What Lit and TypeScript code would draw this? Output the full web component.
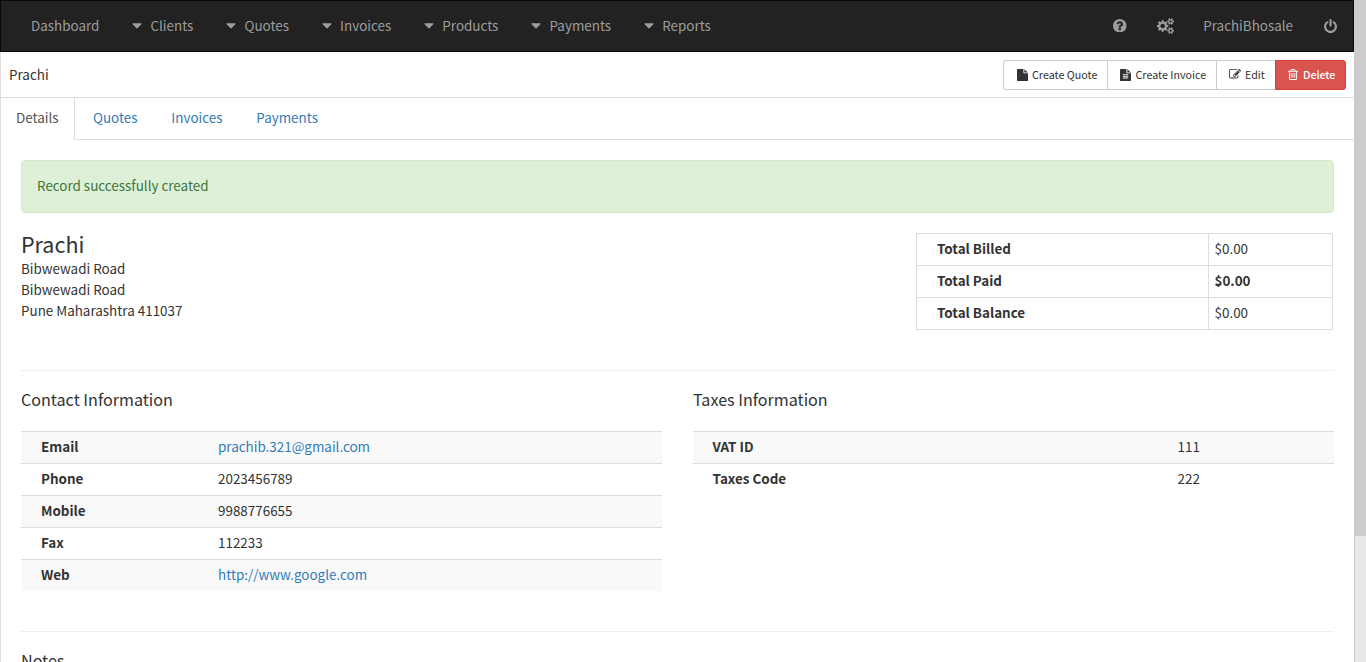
import { LitElement, html, css, svg, nothing } from "lit";
import { customElement, property } from "lit/decorators.js";

interface Glyph {
  box: string;
  d: string;
}

const GLYPHS: Record<string, Glyph> = {
  help: {
    box: "128 128 1536 1536",
    d: "M1024 1376v-192q0-14-9-23t-23-9h-192q-14 0-23 9t-9 23v192q0 14 9 23t23 9h192q14 0 23-9t9-23zm256-672q0-88-55.5-163t-138.5-116-170-41q-243 0-371 213-15 24 8 42l132 100q7 6 19 6 16 0 25-12 53-68 86-92 34-24 86-24 48 0 85.500 26t37.500 59q0 38-20 61t-68 45q-63 28-115.500 86.500t-52.500 125.500v36q0 14 9 23t23 9h192q14 0 23-9t9-23q0-19 21.500-49.500t54.500-49.500q32-18 49-28.500t46-35 44.500-48 28-60.500 12.500-81zm384 192q0 209-103 385.500t-279.500 279.500-385.500 103-385.500-103-279.500-279.500-103-385.500 103-385.500 279.500-279.500 385.500-103 385.500 103 279.500 279.500 103 385.500z",
  },
  cogs: {
    box: "0 0 1920 1792",
    d: "M896 896q0-106-75-181t-181-75-181 75-75 181 75 181 181 75 181-75 75-181zm768 512q0-52-38-90t-90-38-90 38-38 90q0 53 37.500 90.500t90.500 37.500 90.500-37.500 37.500-90.500zm0-1024q0-52-38-90t-90-38-90 38-38 90q0 53 37.500 90.500t90.500 37.500 90.500-37.500 37.500-90.500zm-384 421v185q0 10-7 19.500t-16 10.500l-155 24q-11 35-32 76 34 48 90 115 7 11 7 20 0 12-7 19-23 30-82.500 89.500t-78.500 59.500q-11 0-21-7l-115-90q-37 19-77 31-11 108-23 155-7 24-30 24h-186q-11 0-20-7.500t-10-17.500l-23-153q-34-10-75-31l-118 89q-7 7-20 7-11 0-21-8-144-133-144-160 0-9 7-19 10-14 41-53t47-61q-23-44-35-82l-152-24q-10-1-17-9.500t-7-19.500v-185q0-10 7-19.500t16-10.500l155-24q11-35 32-76-34-48-90-115-7-11-7-20 0-12 7-20 22-30 82-89t79-59q11 0 21 7l115 90q34-18 77-32 11-108 23-154 7-24 30-24h186q11 0 20 7.500t10 17.500l23 153q34 10 75 31l118-89q8-7 20-7 11 0 21 8 144 133 144 160 0 8-7 19-12 16-42 54t-45 60q23 48 34 82l152 23q10 2 17 10.500t7 19.500zm640 533v140q0 16-149 31-12 27-30 52 51 113 51 138 0 4-4 7-122 71-124 71-8 0-46-47t-52-68q-20 2-30 2t-30-2q-14 21-52 68t-46 47q-2 0-124-71-4-3-4-7 0-25 51-138-18-25-30-52-149-15-149-31v-140q0-16 149-31 13-29 30-52-51-113-51-138 0-4 4-7 4-2 35-20t59-34 30-16q8 0 46 46.500t52 67.500q20-2 30-2t30 2q51-71 92-112l6-2q4 0 124 70 4 3 4 7 0 25-51 138 17 23 30 52 149 15 149 31zm0-1024v140q0 16-149 31-12 27-30 52 51 113 51 138 0 4-4 7-122 71-124 71-8 0-46-47t-52-68q-20 2-30 2t-30-2q-14 21-52 68t-46 47q-2 0-124-71-4-3-4-7 0-25 51-138-18-25-30-52-149-15-149-31v-140q0-16 149-31 13-29 30-52-51-113-51-138 0-4 4-7 4-2 35-20t59-34 30-16q8 0 46 46.500t52 67.500q20-2 30-2t30 2q51-71 92-112l6-2q4 0 124 70 4 3 4 7 0 25-51 138 17 23 30 52 149 15 149 31z",
  },
  power: {
    box: "128 0 1536 1664",
    d: "M1664 896q0 156-61 298t-164 245-245 164-298 61-298-61-245-164-164-245-61-298q0-182 80.500-343t226.500-270q43-32 95.500-25t83.500 50q32 42 24.500 94.500t-49.500 84.500q-98 74-151.500 181t-53.500 228q0 104 40.500 198.500t109.500 163.500 163.500 109.500 198.500 40.500 198.500-40.500 163.500-109.500 109.500-163.500 40.500-198.500q0-121-53.500-228t-151.500-181q-42-32-49.500-84.500t24.500-94.500q31-43 84-50t95 25q146 109 226.500 270t80.500 343zm-640-768v640q0 52-38 90t-90 38-90-38-38-90v-640q0-52 38-90t90-38 90 38 38 90z",
  },
  file: {
    box: "128 0 1536 1792",
    d: "M1152 512v-472q22 14 36 28l408 408q14 14 28 36h-472zm-128 32q0 40 28 68t68 28h544v1056q0 40-28 68t-68 28h-1344q-40 0-68-28t-28-68v-1600q0-40 28-68t68-28h800v544z",
  },
  fileText: {
    box: "128 0 1536 1792",
    d: "M1596 476q14 14 28 36h-472v-472q22 14 36 28zm-476 164h544v1056q0 40-28 68t-68 28h-1344q-40 0-68-28t-28-68v-1600q0-40 28-68t68-28h800v544q0 40 28 68t68 28zm160 736v-64q0-14-9-23t-23-9h-704q-14 0-23 9t-9 23v64q0 14 9 23t23 9h704q14 0 23-9t9-23zm0-256v-64q0-14-9-23t-23-9h-704q-14 0-23 9t-9 23v64q0 14 9 23t23 9h704q14 0 23-9t9-23zm0-256v-64q0-14-9-23t-23-9h-704q-14 0-23 9t-9 23v64q0 14 9 23t23 9h704q14 0 23-9t9-23z",
  },
  edit: {
    box: "0 128 1792 1536",
    d: "M888 1184l116-116-152-152-116 116v56h96v96h56zm440-720q-16-16-33 1l-350 350q-17 17-1 33t33-1l350-350q17-17 1-33zm80 594v190q0 119-84.500 203.500t-203.500 84.500h-832q-119 0-203.500-84.500t-84.500-203.500v-832q0-119 84.500-203.500t203.500-84.500h832q63 0 117 25 15 7 18 23 3 17-9 29l-49 49q-14 14-32 8-23-6-45-6h-832q-66 0-113 47t-47 113v832q0 66 47 113t113 47h832q66 0 113-47t47-113v-126q0-13 9-22l64-64q15-15 35-7t20 29zm-96-738l288 288-672 672h-288v-288zm444 132l-92 92-288-288 92-92q28-28 68-28t68 28l152 152q28 28 28 68t-28 68z",
  },
  trash: {
    box: "192 128 1408 1536",
    d: "M704 736v576q0 14-9 23t-23 9h-64q-14 0-23-9t-9-23v-576q0-14 9-23t23-9h64q14 0 23 9t9 23zm256 0v576q0 14-9 23t-23 9h-64q-14 0-23-9t-9-23v-576q0-14 9-23t23-9h64q14 0 23 9t9 23zm256 0v576q0 14-9 23t-23 9h-64q-14 0-23-9t-9-23v-576q0-14 9-23t23-9h64q14 0 23 9t9 23zm128 724v-948h-896v948q0 22 7 40.500t14.500 27 10.500 8.500h832q3 0 10.500-8.500t14.500-27 7-40.500zm-672-1076h448l-48-117q-7-9-17-11h-317q-10 2-17 11zm928 32v64q0 14-9 23t-23 9h-96v948q0 83-47 143.500t-113 60.500h-832q-66 0-113-58.500t-47-141.500v-952h-96q-14 0-23-9t-9-23v-64q0-14 9-23t23-9h309l70-167q15-37 54-63t79-26h320q40 0 79 26t54 63l70 167h309q14 0 23 9t9 23z",
  },
  caret: { box: "0 0 10 6", d: "M.9.3h8.200q.9.2.3.900l-3.900 4q-.5.500-1 0l-3.900-4q-.6-.700.3-.900z" },
};

@customElement("ui-icon")
class UiIcon extends LitElement {
  @property() name = "";
  static styles = css`
    :host { display: block; flex: none; }
    .glyph { display: block; width: 100%; height: 100%; fill: currentColor; }
  `;
  render() {
    const g = GLYPHS[this.name];
    if (!g) return nothing;
    return html`<svg class="glyph" viewBox=${g.box} preserveAspectRatio="none" aria-hidden="true">${svg`<path d=${g.d}></path>`}</svg>`;
  }
}

const MENUS = ["Clients", "Quotes", "Invoices", "Products", "Payments", "Reports"];
const ACTIONS = [
  { id: "quote", icon: "file", label: "Create Quote" },
  { id: "invoice", icon: "fileText", label: "Create Invoice" },
  { id: "edit", icon: "edit", label: "Edit" },
  { id: "delete", icon: "trash", label: "Delete" },
];
const TOTALS = [
  { label: "Total Billed", value: "$0.00", cls: "" },
  { label: "Total Paid", value: "$0.00", cls: "strong" },
  { label: "Total Balance", value: "$0.00", cls: "" },
];
const CONTACT = [
  { label: "Email", value: "prachib.321@gmail.com", link: true },
  { label: "Phone", value: "2023456789", link: false },
  { label: "Mobile", value: "9988776655", link: false },
  { label: "Fax", value: "112233", link: false },
  { label: "Web", value: "http://www.google.com", link: true },
];
const TAXES = [
  { label: "VAT ID", value: "111", link: false },
  { label: "Taxes Code", value: "222", link: false },
];

@customElement("app-root")
class AppRoot extends LitElement {
  static styles = css`
    :host {
      display: flex;
      width: 1366px;
      height: 662px;
      overflow: hidden;
      background: #fff;
      color: #333;
      font-family: "Noto Sans CJK SC", "Noto Sans", sans-serif;
      font-size: 13.43px;
      line-height: 21px;
      white-space: nowrap;
    }
    * { box-sizing: border-box; }
    .page { width: 1354px; height: 662px; overflow: hidden; }
    .nav {
      display: flex;
      justify-content: space-between;
      height: 52px;
      padding: 0 16px 1px 15px;
      border: 1px solid #080808;
      background: #222;
      color: #9d9d9d;
    }
    .menu, .tools { display: flex; align-items: center; }
    .menu { gap: 1.1px; }
    .menu-item { display: flex; align-items: center; padding: 0 16px; }
    .menu-item:first-child { padding-left: 15px; }
    .caret { width: 10px; height: 6px; margin: 0 8px 0 0; }
    .help { width: 13.5px; height: 13.5px; margin-right: 30.5px; }
    .cogs { width: 17px; height: 16px; margin-right: 29px; }
    .power { width: 13px; height: 14px; margin-left: 31px; }
    .body { border-left: 1px solid #ddd; }
    .head {
      display: flex;
      align-items: center;
      justify-content: space-between;
      height: 46px;
      padding: 0 8px;
      border-bottom: 1px solid #ddd;
    }
    .actions { display: flex; font-size: 10.74px; line-height: 18px; }
    .btn {
      display: flex;
      align-items: center;
      height: 30px;
      border: 1px solid #ccc;
      border-right: 0;
      padding-left: 12px;
      gap: 5px;
    }
    .quote { width: 104px; border-radius: 3px 0 0 3px; padding-left: 13px; gap: 4px; }
    .invoice { width: 109px; gap: 4.5px; }
    .edit { width: 59px; gap: 4px; }
    .delete {
      width: 71px;
      border: 1px solid #d43f3a;
      border-radius: 0 3px 3px 0;
      background: #d9534f;
      color: #fff;
      font-weight: 500;
      letter-spacing: -0.1px;
    }
    .i-quote, .i-invoice { width: 11px; height: 12px; }
    .i-edit { width: 12px; height: 10.3px; }
    .i-delete { width: 10px; height: 11px; }
    .tabs { display: flex; height: 42px; }
    .tab { padding: 9px 0 0 15px; }
    .tab.active { width: 74px; border-right: 1px solid #ddd; color: #555; }
    .rest { display: flex; flex: 1; gap: 33.8px; padding: 9px 0 0 18px; border-bottom: 1px solid #ddd; }
    .link { color: #337ab7; }
    .content { padding: 20px 20px 0; }
    .alert {
      height: 53px;
      padding: 14px 15px;
      border: 1px solid #d6e9c6;
      border-radius: 4px;
      background: #dff0d8;
      color: #3c763d;
    }
    .summary {
      display: flex;
      justify-content: space-between;
      height: 137px;
      margin-top: 20px;
      padding-right: 1px;
    }
    .name { font-size: 21.5px; line-height: 22px; margin-bottom: 3px; font-weight: 400; }
    .totals { width: 417px; height: 97px; border: 1px solid #ddd; }
    .total { display: flex; height: 32px; border-bottom: 1px solid #ddd; }
    .total:last-child { border-bottom: 0; }
    .total-label { width: 292px; padding: 4px 0 0 20px; border-right: 1px solid #ddd; font-weight: 700; }
    .total-value { padding: 4px 0 0 5.5px; }
    .strong { font-weight: 700; }
    .rule { height: 1px; background: #eee; }
    .columns { display: flex; gap: 31px; height: 260px; }
    .column { width: 641px; }
    .title { font-size: 16.12px; line-height: 20px; padding-top: 18px; margin-bottom: 22px; }
    .row { display: flex; height: 32px; padding-top: 4px; border-top: 1px solid #ddd; }
    .row:nth-child(even) { background: #f9f9f9; }
    .label { width: 177px; margin-left: 20px; font-weight: 700; flex: none; }
    .wide .label { width: 465px; margin-left: 19.5px; }
    .scrollbar { width: 12px; height: 662px; background: #e8e8e8; border-left: 1px solid #ccc; }
    .thumb { height: 536px; background: #ccc; }
  `;

  private rows(items: typeof CONTACT) {
    return items.map(
      (r) => html`<div class="row">
        <div class="label">${r.label}</div>
        <div class=${r.link ? "link" : "value"}>${r.value}</div>
      </div>`
    );
  }

  render() {
    return html`
      <div class="page">
        <nav class="nav">
          <div class="menu">
            <div class="menu-item">Dashboard</div>
            ${MENUS.map((m) => html`<div class="menu-item"><ui-icon class="caret" name="caret"></ui-icon>${m}</div>`)}
          </div>
          <div class="tools">
            <ui-icon class="help" name="help"></ui-icon>
            <ui-icon class="cogs" name="cogs"></ui-icon>
            <span>PrachiBhosale</span>
            <ui-icon class="power" name="power"></ui-icon>
          </div>
        </nav>
        <div class="body">
          <div class="head">
            <div>Prachi</div>
            <div class="actions">
              ${ACTIONS.map((a) => html`<div class="btn ${a.id}"><ui-icon class="i-${a.id}" name=${a.icon}></ui-icon><span>${a.label}</span></div>`)}
            </div>
          </div>
          <div class="tabs">
            <div class="tab active">Details</div>
            <div class="rest link"><span>Quotes</span><span>Invoices</span><span>Payments</span></div>
          </div>
          <main class="content">
            <div class="alert">Record successfully created</div>
            <div class="summary">
              <div>
                <div class="name">Prachi</div>
                <div>Bibwewadi Road</div>
                <div>Bibwewadi Road</div>
                <div>Pune Maharashtra 411037</div>
              </div>
              <div class="totals">
                ${TOTALS.map((t) => html`<div class="total"><div class="total-label">${t.label}</div><div class="total-value ${t.cls}">${t.value}</div></div>`)}
              </div>
            </div>
            <div class="rule"></div>
            <div class="columns">
              <section class="column"><div class="title">Contact Information</div>${this.rows(CONTACT)}</section>
              <section class="column wide"><div class="title">Taxes Information</div>${this.rows(TAXES)}</section>
            </div>
            <div class="rule"></div>
            <div class="title">Notes</div>
          </main>
        </div>
      </div>
      <div class="scrollbar"><div class="thumb"></div></div>
    `;
  }
}
